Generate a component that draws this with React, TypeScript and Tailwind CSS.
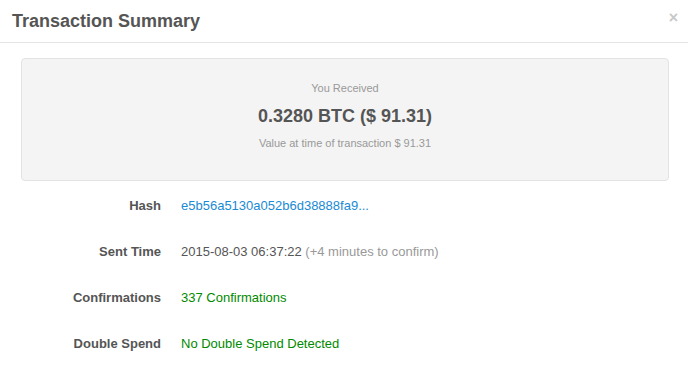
import React from "react";

const rows = [
  { label: "Hash", value: <span className="text-[#1a8ad4]">e5b56a5130a052b6d38888fa9...</span> },
  {
    label: "Sent Time",
    value: (
      <span>
        <span className="text-[#555]">2015-08-03 06:37:22</span>{" "}
        <span className="text-[#999]">(+4 minutes to confirm)</span>
      </span>
    ),
  },
  { label: "Confirmations", value: <span className="text-[#008a00]">337 Confirmations</span> },
  { label: "Double Spend", value: <span className="text-[#008a00]">No Double Spend Detected</span> },
];

export default function App() {
  return (
    <div className="w-[688px] h-[366px] bg-white overflow-hidden" style={{ fontFamily: '"Liberation Sans", Arial, sans-serif' }}>
      <div className="flex items-center justify-between h-[43px] border-b border-[#e5e5e5] pl-[12px] pr-[10px]">
        <h4 className="text-[18px] font-bold text-[#555] leading-none -mt-[1px]">Transaction Summary</h4>
        <span className="text-[#c8c8c8] font-bold text-[16px] leading-none -mt-[6px]">×</span>
      </div>
      <div className="pl-[21px] pr-[19px] pt-[15px]">
        <div className="h-[123px] bg-[#f4f4f4] border border-[#e3e3e3] rounded-[4px] flex flex-col items-center pt-[23px]">
          <div className="text-[11px] text-[#999] leading-[13px]">You Received</div>
          <div className="text-[18px] font-bold text-[#555] leading-[20px] mt-[11px]">0.3280 BTC ($ 91.31)</div>
          <div className="text-[11px] text-[#999] leading-[13px] mt-[11px]">Value at time of transaction $ 91.31</div>
        </div>
      </div>
      <div className="mt-[17px] flex flex-col gap-[30px]">
        {rows.map((r) => (
          <div key={r.label} className="flex items-center h-[16px] text-[13px]">
            <div className="w-[161px] text-right font-bold text-[#555]">{r.label}</div>
            <div className="ml-[20px]">{r.value}</div>
          </div>
        ))}
      </div>
    </div>
  );
}
